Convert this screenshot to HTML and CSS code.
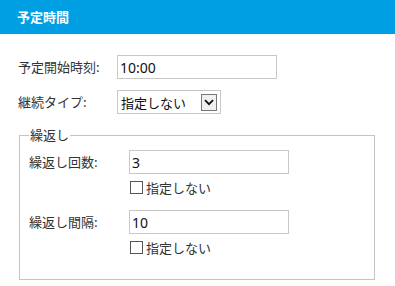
FILE: index.html
```html
<!DOCTYPE html>
<html lang="ja">
<head>
<meta charset="utf-8">
<link rel="stylesheet" href="styles.css">
</head>
<body>
<div class="header">予定時間</div>
<div class="content">
  <div class="row">
    <label class="label">予定開始時刻:</label>
    <input class="text" type="text" value="10:00">
  </div>
  <div class="row">
    <label class="label">継続タイプ:</label>
    <div class="select">
      <span class="select-text">指定しない</span>
      <span class="select-btn">
        <svg width="10" height="7" viewBox="0 0 10 7"><path d="M1 1.2 L5 5.2 L9 1.2" fill="none" stroke="#111" stroke-width="1.8"/></svg>
      </span>
    </div>
  </div>
  <fieldset class="group">
    <legend class="legend">繰返し</legend>
    <div class="row inner">
      <label class="label wide">繰返し回数:</label>
      <input class="text" type="text" value="3">
    </div>
    <div class="check-row">
      <input class="check" type="checkbox"><span>指定しない</span>
    </div>
    <div class="row inner second">
      <label class="label wide">繰返し間隔:</label>
      <input class="text" type="text" value="10">
    </div>
    <div class="check-row">
      <input class="check" type="checkbox"><span>指定しない</span>
    </div>
  </fieldset>
</div>
</body>
</html>
```

FILE: styles.css
```css
html, body {
  margin: 0;
  padding: 0;
  background: #fff;
}
body {
  font-family: "Noto Sans CJK JP", "Noto Sans", sans-serif;
  font-size: 13px;
  color: #333;
  width: 395px;
}
.header {
  height: 34px;
  line-height: 34px;
  background: #009fe3;
  color: #fff;
  font-weight: bold;
  padding-left: 17px;
  font-size: 13px;
}
.content {
  padding: 21px 0 0 18px;
}
.row {
  display: flex;
  align-items: center;
  height: 24px;
  margin-bottom: 11px;
}
.label {
  width: 99px;
  flex: none;
  line-height: 24px;
}
.label.wide {
  width: 100px;
}
.text {
  box-sizing: border-box;
  width: 160px;
  height: 24px;
  border: 1px solid #c8c8c8;
  margin: 0;
  padding: 0 2px;
  font-family: "Noto Sans", "Noto Sans CJK JP", sans-serif;
  font-size: 14px;
  color: #111;
  outline: none;
}
.select {
  box-sizing: border-box;
  width: 104px;
  height: 24px;
  border: 1px solid #c8c8c8;
  display: flex;
  align-items: center;
  justify-content: space-between;
  padding: 0 3px 0 3px;
  color: #111;
}
.select-text {
  font-size: 13px;
}
.select-btn {
  box-sizing: border-box;
  width: 16px;
  height: 17px;
  border: 1px solid #777;
  background: #f0f0f0;
  display: flex;
  align-items: center;
  justify-content: center;
}
.group {
  margin: 14px 0 0 1px;
  width: 356px;
  height: 152px;
  box-sizing: border-box;
  border: 1px solid #c4c4c4;
  padding: 0 0 0 9px;
}
.legend {
  padding: 0 1px;
  margin-left: 0;
  line-height: 14px;
}
.inner {
  margin-top: 8px;
  margin-bottom: 7px;
}
.inner.second {
  margin-top: 16px;
}
.check-row {
  display: flex;
  align-items: center;
  height: 13px;
  padding-left: 100px;
  gap: 3px;
}
.check {
  appearance: none;
  -webkit-appearance: none;
  box-sizing: border-box;
  width: 13px;
  height: 13px;
  margin: 0 0 0 1px;
  border: 1px solid #555;
  background: #fff;
}
```
